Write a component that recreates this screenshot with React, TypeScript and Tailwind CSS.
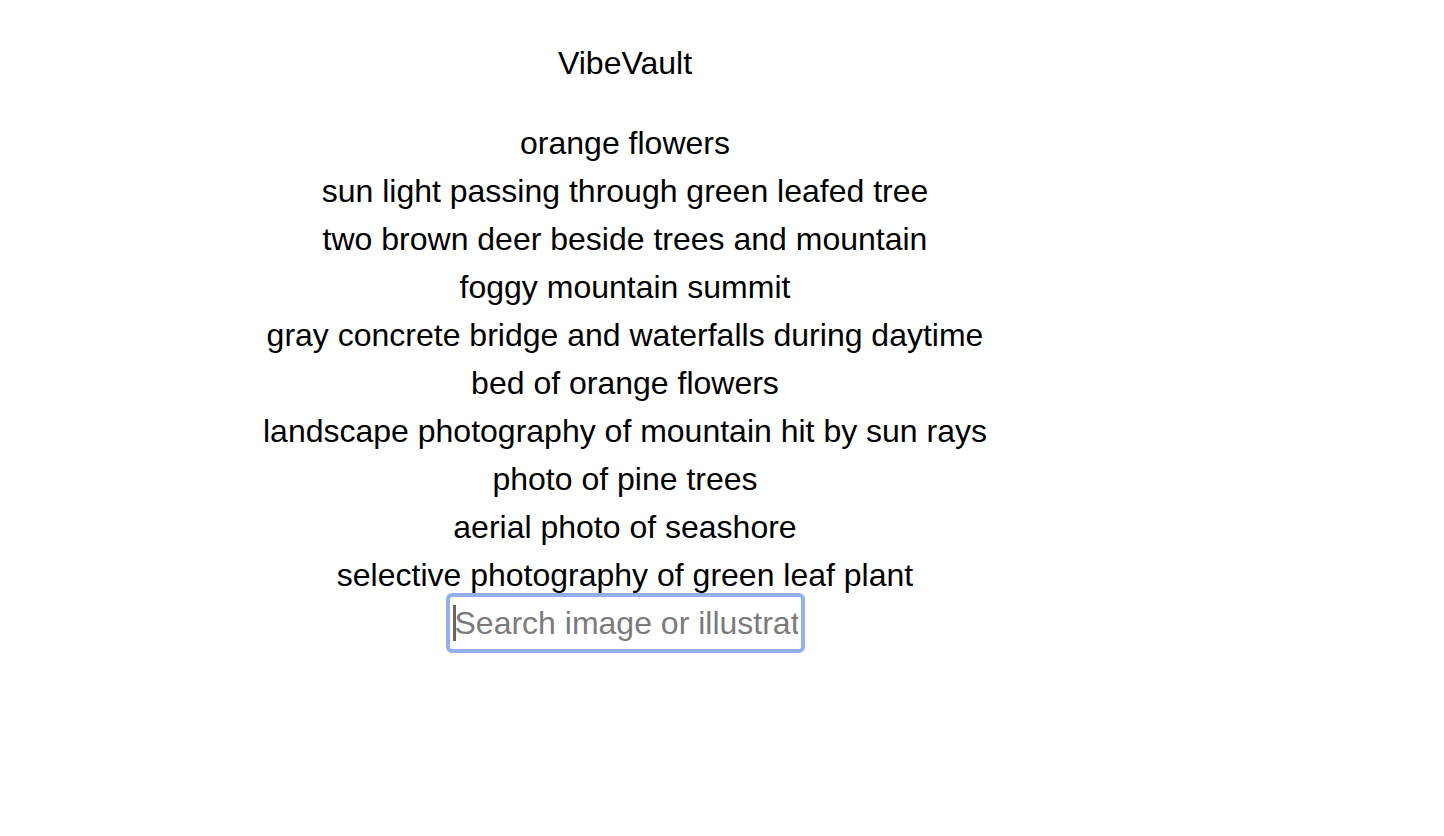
import React from 'react';

const photos: string[] = [
  'orange flowers',
  'sun light passing through green leafed tree',
  'two brown deer beside trees and mountain',
  'foggy mountain summit',
  'gray concrete bridge and waterfalls during daytime',
  'bed of orange flowers',
  'landscape photography of mountain hit by sun rays',
  'photo of pine trees',
  'aerial photo of seashore',
  'selective photography of green leaf plant',
];

// Página principal: título, lista de resultados y buscador
const App: React.FC = () => {
  return (
    <div className="min-h-[836px] w-full bg-white font-['Liberation_Sans',Arial,sans-serif] text-black">
      <div className="flex w-[1250px] flex-col items-center pt-[43px] text-center">
        <h1 className="text-[32px] leading-[40px]">VibeVault</h1>

        {/* Lista de fotos */}
        <ul className="mt-[40px] flex flex-col items-center gap-[8px]">
          {photos.map((title, index) => (
            <li key={index} className="text-[32px] leading-[40px]">
              {title}
            </li>
          ))}
        </ul>

        {/* Campo de búsqueda */}
        <div className="relative -mt-[2px] h-[60px] w-[359px] rounded-[6px] border-[4px] border-[#93aff2] bg-white pl-[5px] pr-[3px]">
          <input
            type="text"
            placeholder="Search image or illustration"
            className="h-full w-full bg-transparent text-[32px] leading-none text-black outline-none placeholder:text-[#7b7b7b]"
          />
          <span className="absolute left-[3px] top-[8px] h-[36px] w-[3px] bg-[#666]" />
        </div>
      </div>
    </div>
  );
};

export default App;
